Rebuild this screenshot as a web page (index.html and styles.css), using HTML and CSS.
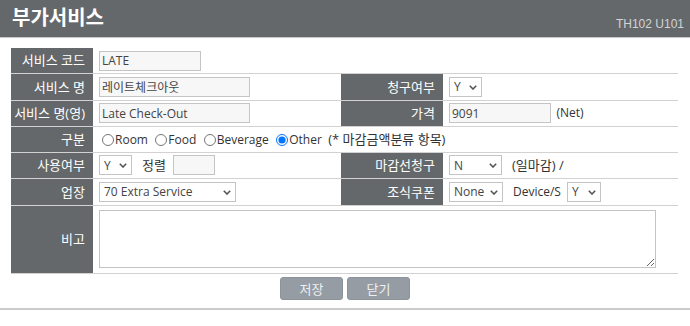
FILE: index.html
```html
<!DOCTYPE html>
<html lang="ko">
<head>
  <meta charset="UTF-8">
  <meta name="viewport" content="width=device-width, initial-scale=1.0">
  <title>부가서비스</title>
  <link rel="stylesheet" href="styles.css">
</head>
<body>
  <header class="top">
    <h1>부가서비스</h1>
    <span class="screen-code">TH102 U101</span>
  </header>

  <div class="container">
    <table class="form-table">
      <colgroup>
        <col class="c-label1">
        <col class="c-value1">
        <col class="c-label2">
        <col class="c-value2">
      </colgroup>
      <tr class="row-first">
        <th>서비스 코드</th>
        <td colspan="3"><input type="text" class="txt w100" value="LATE"></td>
      </tr>
      <tr class="row-tall">
        <th>서비스 명</th>
        <td><input type="text" class="txt w150" value="레이트체크아웃"></td>
        <th>청구여부</th>
        <td>
          <span class="sel-wrap w33">
            <select class="sel"><option>Y</option><option>N</option></select>
            <svg class="chev" viewBox="0 0 8 5"><path d="M0.8 0.8l3.2 3.2 3.2-3.2"/></svg>
          </span>
        </td>
      </tr>
      <tr>
        <th>서비스 명(영)</th>
        <td><input type="text" class="txt w150" value="Late Check-Out"></td>
        <th>가격</th>
        <td><input type="text" class="txt w102" value="9091"> <span class="latin note">(Net)</span></td>
      </tr>
      <tr>
        <th>구분</th>
        <td colspan="3" class="radios">
          <label><input type="radio" name="kind">Room</label>
          <label><input type="radio" name="kind">Food</label>
          <label><input type="radio" name="kind">Beverage</label>
          <label><input type="radio" name="kind" checked>Other</label>
          <span class="note">(* 마감금액분류 항목)</span>
        </td>
      </tr>
      <tr>
        <th>사용여부</th>
        <td>
          <div class="inline">
            <span class="sel-wrap w33">
              <select class="sel"><option>Y</option><option>N</option></select>
              <svg class="chev" viewBox="0 0 8 5"><path d="M0.8 0.8l3.2 3.2 3.2-3.2"/></svg>
            </span>
            <span>정렬</span>
            <input type="text" class="txt w42" value="">
          </div>
        </td>
        <th>마감선청구</th>
        <td>
          <div class="inline">
            <span class="sel-wrap w53">
              <select class="sel"><option>N</option><option>Y</option></select>
              <svg class="chev" viewBox="0 0 8 5"><path d="M0.8 0.8l3.2 3.2 3.2-3.2"/></svg>
            </span>
            <span>(일마감) /</span>
          </div>
        </td>
      </tr>
      <tr class="row-tall">
        <th>업장</th>
        <td>
          <span class="sel-wrap w137">
            <select class="sel"><option>70 Extra Service</option></select>
            <svg class="chev" viewBox="0 0 8 5"><path d="M0.8 0.8l3.2 3.2 3.2-3.2"/></svg>
          </span>
        </td>
        <th>조식쿠폰</th>
        <td>
          <div class="inline">
            <span class="sel-wrap w54">
              <select class="sel"><option>None</option></select>
              <svg class="chev" viewBox="0 0 8 5"><path d="M0.8 0.8l3.2 3.2 3.2-3.2"/></svg>
            </span>
            <span class="latin">Device/S</span>
            <span class="sel-wrap w34 tight">
              <select class="sel"><option>Y</option><option>N</option></select>
              <svg class="chev" viewBox="0 0 8 5"><path d="M0.8 0.8l3.2 3.2 3.2-3.2"/></svg>
            </span>
          </div>
        </td>
      </tr>
      <tr class="row-memo">
        <th>비고</th>
        <td colspan="3"><textarea class="memo"></textarea></td>
      </tr>
    </table>

    <div class="buttons">
      <button type="button" class="btn">저장</button>
      <button type="button" class="btn">닫기</button>
    </div>
  </div>

  <div class="bottom-line"></div>
</body>
</html>
```

FILE: styles.css
```css
body {
  margin: 0;
  padding: 0;
  font-family: "Open Sans", "Noto Sans CJK KR", sans-serif;
  font-size: 13px;
  color: #333;
  background-color: white;
}
.top {
  height: 37px;
  background-color: #65686b;
  border-bottom: 1px solid #c8c8c8;
  display: flex;
  align-items: center;
  justify-content: space-between;
  padding: 0 6px 0 12px;
}
.top h1 {
  margin: 0;
  color: white;
  font-family: "Noto Sans CJK KR", sans-serif;
  font-size: 20px;
  font-weight: bold;
  line-height: 1;
  margin-top: -4px;
}
.screen-code {
  font-family: "Liberation Sans", Arial, sans-serif;
  font-size: 12px;
  color: #d2d4d6;
  margin-top: 11px;
}
.container {
  padding: 10px 12px 0 11px;
}
.form-table {
  width: 667px;
  table-layout: fixed;
  border-collapse: collapse;
}
.c-label1 { width: 82px; }
.c-value1 { width: 248px; }
.c-label2 { width: 102px; }
.c-value2 { width: 235px; }
.form-table tr {
  height: 26px;
}
.form-table tr.row-first {
  height: 25px;
}
.form-table tr.row-tall {
  height: 27px;
}
.form-table tr.row-memo {
  height: 68px;
}
.form-table th,
.form-table td {
  border-bottom: 1px solid #d2d2d2;
  padding: 0 0 0 6px;
  line-height: 18px;
  vertical-align: middle;
  white-space: nowrap;
}
.form-table th {
  background-color: #65686b;
  color: white;
  font-weight: normal;
  text-align: right;
  padding: 0 8px 0 0;
}
.latin {
  font-size: 12px;
}
.txt {
  height: 20px;
  box-sizing: border-box;
  border: 1px solid #c4c4c4;
  background-color: #f7f7f7;
  padding: 0 2px;
  font-family: "Open Sans", "Noto Sans CJK KR", sans-serif;
  font-size: 12px;
  color: #444;
  vertical-align: middle;
  margin: 0;
}
.w100 { width: 102px; }
.w150 { width: 151px; }
.w102 { width: 102px; }
.w42 { width: 42px; }

/* select with drawn chevron */
.sel-wrap {
  position: relative;
  display: inline-block;
  vertical-align: middle;
  height: 20px;
}
.sel {
  appearance: none;
  -webkit-appearance: none;
  width: 100%;
  height: 20px;
  box-sizing: border-box;
  border: 1px solid #c4c4c4;
  border-radius: 0;
  background-color: white;
  font-family: "Open Sans", "Noto Sans CJK KR", sans-serif;
  font-size: 12px;
  color: #444;
  padding: 0 14px 0 4px;
  margin: 0;
  display: block;
}
.chev {
  position: absolute;
  right: 5px;
  top: 8px;
  width: 8px;
  height: 5px;
  fill: none;
  stroke: #555;
  stroke-width: 1.6;
  pointer-events: none;
}
.w33 { width: 33px; }
.w34 { width: 34px; }
.w53 { width: 53px; }
.w54 { width: 54px; }
.w137 { width: 137px; }
.inline {
  display: flex;
  align-items: center;
  gap: 10px;
}
.inline .txt {
  margin-left: -3px;
}
.inline .tight {
  margin-left: -4px;
}
.note {
  margin-left: 2px;
}
.radios label {
  font-size: 12px;
  margin-right: 1px;
}
.radios input {
  margin: 0 1px 0 3px;
  width: 12px;
  height: 12px;
  vertical-align: -2px;
}
.memo {
  display: block;
  width: 557px;
  height: 58px;
  box-sizing: border-box;
  border: 1px solid #c4c4c4;
  margin: 0;
}
.buttons {
  display: flex;
  justify-content: center;
  gap: 4px;
  margin-top: 3px;
  padding-left: 1px;
}
.btn {
  width: 63px;
  height: 23px;
  background-color: #959ca4;
  color: #eef0f2;
  border: 1px solid #8c939b;
  border-radius: 3px;
  font-family: "Noto Sans CJK KR", sans-serif;
  font-size: 13px;
  line-height: 1;
  padding: 0;
  cursor: pointer;
}
.btn:hover {
  background-color: #858c94;
}
.bottom-line {
  margin-top: 8px;
  border-top: 2px solid #cbcbcb;
}
```
